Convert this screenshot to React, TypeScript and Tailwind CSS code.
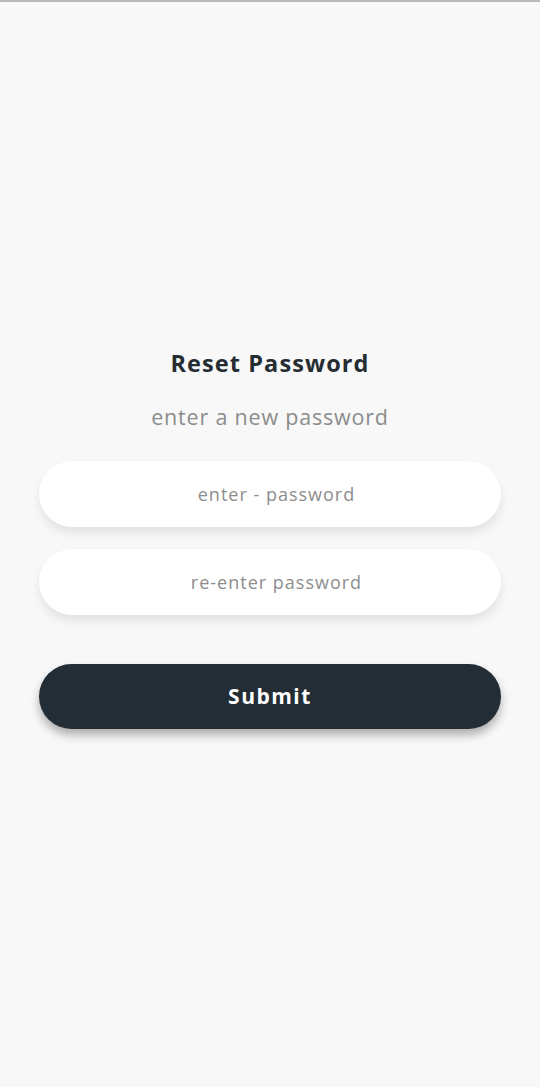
export default function App() {
  return (
    <div className="min-h-[1087px] w-full bg-[#f8f8f8] border-t-2 border-[#b9b9b9] flex flex-col items-center" style={{ fontFamily: '"Open Sans", "Liberation Sans", sans-serif' }}>
      <div className="w-full px-[39px] pt-[345px] flex flex-col items-center">
        <h1 className="text-[23.5px] leading-[32px] font-bold text-[#252d33] tracking-[1.1px]">Reset Password</h1>
        <p className="mt-[23px] text-[21.5px] leading-[30px] text-[#8c8c8c] tracking-[0.8px]">enter a new password</p>
        <div className="mt-[29px] w-full flex flex-col gap-[22px]">
          <input
            type="password"
            placeholder="enter - password"
            className="w-full h-[66px] rounded-full bg-white pl-[13px] text-center text-[18px] text-[#555] placeholder:text-[#8d8d8d] outline-none shadow-[0_6px_10px_rgba(0,0,0,0.09)] tracking-[1px]"
          />
          <input
            type="password"
            placeholder="re-enter password"
            className="w-full h-[66px] rounded-full bg-white pl-[13px] text-center text-[18px] text-[#555] placeholder:text-[#8d8d8d] outline-none shadow-[0_6px_10px_rgba(0,0,0,0.09)] tracking-[1px]"
          />
        </div>
        <button className="mt-[49px] w-full h-[65px] rounded-full bg-[#232d35] text-white text-[21px] font-bold tracking-[1.5px] shadow-[0_6px_10px_rgba(0,0,0,0.3)]">
          Submit
        </button>
      </div>
    </div>
  );
}
